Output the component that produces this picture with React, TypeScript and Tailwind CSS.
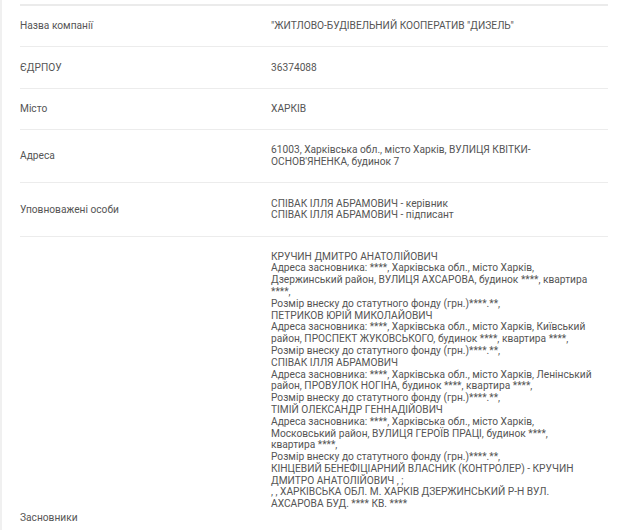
import React from 'react';

const rows: { label: string; value: React.ReactNode }[] = [
  { label: 'Назва компанії', value: '"ЖИТЛОВО-БУДІВЕЛЬНИЙ КООПЕРАТИВ "ДИЗЕЛЬ"' },
  { label: 'ЄДРПОУ', value: '36374088' },
  { label: 'Місто', value: 'ХАРКІВ' },
  {
    label: 'Адреса',
    value: "61003, Харківська обл., місто Харків, ВУЛИЦЯ КВІТКИ-ОСНОВ'ЯНЕНКА, будинок 7",
  },
  {
    label: 'Уповноважені особи',
    value: (
      <>
        СПІВАК ІЛЛЯ АБРАМОВИЧ - керівник
        <br />
        СПІВАК ІЛЛЯ АБРАМОВИЧ - підписант
      </>
    ),
  },
];

const founders = [
  {
    name: 'КРУЧИН ДМИТРО АНАТОЛІЙОВИЧ',
    addr: 'Адреса засновника: ****, Харківська обл., місто Харків, Дзержинський район, ВУЛИЦЯ АХСАРОВА, будинок ****, квартира ****,',
  },
  {
    name: 'ПЕТРИКОВ ЮРІЙ МИКОЛАЙОВИЧ',
    addr: 'Адреса засновника: ****, Харківська обл., місто Харків, Київський район, ПРОСПЕКТ ЖУКОВСЬКОГО, будинок ****, квартира ****,',
  },
  {
    name: 'СПІВАК ІЛЛЯ АБРАМОВИЧ',
    addr: 'Адреса засновника: ****, Харківська обл., місто Харків, Ленінський район, ПРОВУЛОК НОГІНА, будинок ****, квартира ****,',
  },
  {
    name: 'ТІМІЙ ОЛЕКСАНДР ГЕННАДІЙОВИЧ',
    addr: 'Адреса засновника: ****, Харківська обл., місто Харків, Московський район, ВУЛИЦЯ ГЕРОЇВ ПРАЦІ, будинок ****, квартира ****,',
  },
];

export default function App() {
  return (
    <div className="min-h-[530px] bg-white border-l-2 border-[#f0f0f0] pl-[18px] pt-1 pr-3 font-['Roboto',Arial,sans-serif] text-[10.2px] leading-[11.8px] text-[#555]">
      <table className="w-full border-collapse border-t-2 border-[#ebebeb]">
        <tbody>
          {rows.map((r) => (
            <tr key={r.label} className="border-b border-[#ececec]">
              <td className="w-[251px] py-[14.3px] align-middle">{r.label}</td>
              <td className="py-[14.3px] pr-[15px] align-middle">{r.value}</td>
            </tr>
          ))}
          <tr>
            <td className="w-[251px] align-middle">Засновники</td>
            <td className="pt-[14px] pb-[290px] pr-[15px] align-top">
              {founders.map((f) => (
                <div key={f.name}>
                  <div>{f.name}</div>
                  <div>{f.addr}</div>
                  <div>Розмір внеску до статутного фонду (грн.)****.**,</div>
                </div>
              ))}
              <div>КІНЦЕВИЙ БЕНЕФІЦІАРНИЙ ВЛАСНИК (КОНТРОЛЕР) - КРУЧИН ДМИТРО АНАТОЛІЙОВИЧ , ;</div>
              <div>, , ХАРКІВСЬКА ОБЛ. М. ХАРКІВ ДЗЕРЖИНСЬКИЙ Р-Н ВУЛ. АХСАРОВА БУД. **** КВ. ****</div>
            </td>
          </tr>
        </tbody>
      </table>
    </div>
  );
}
